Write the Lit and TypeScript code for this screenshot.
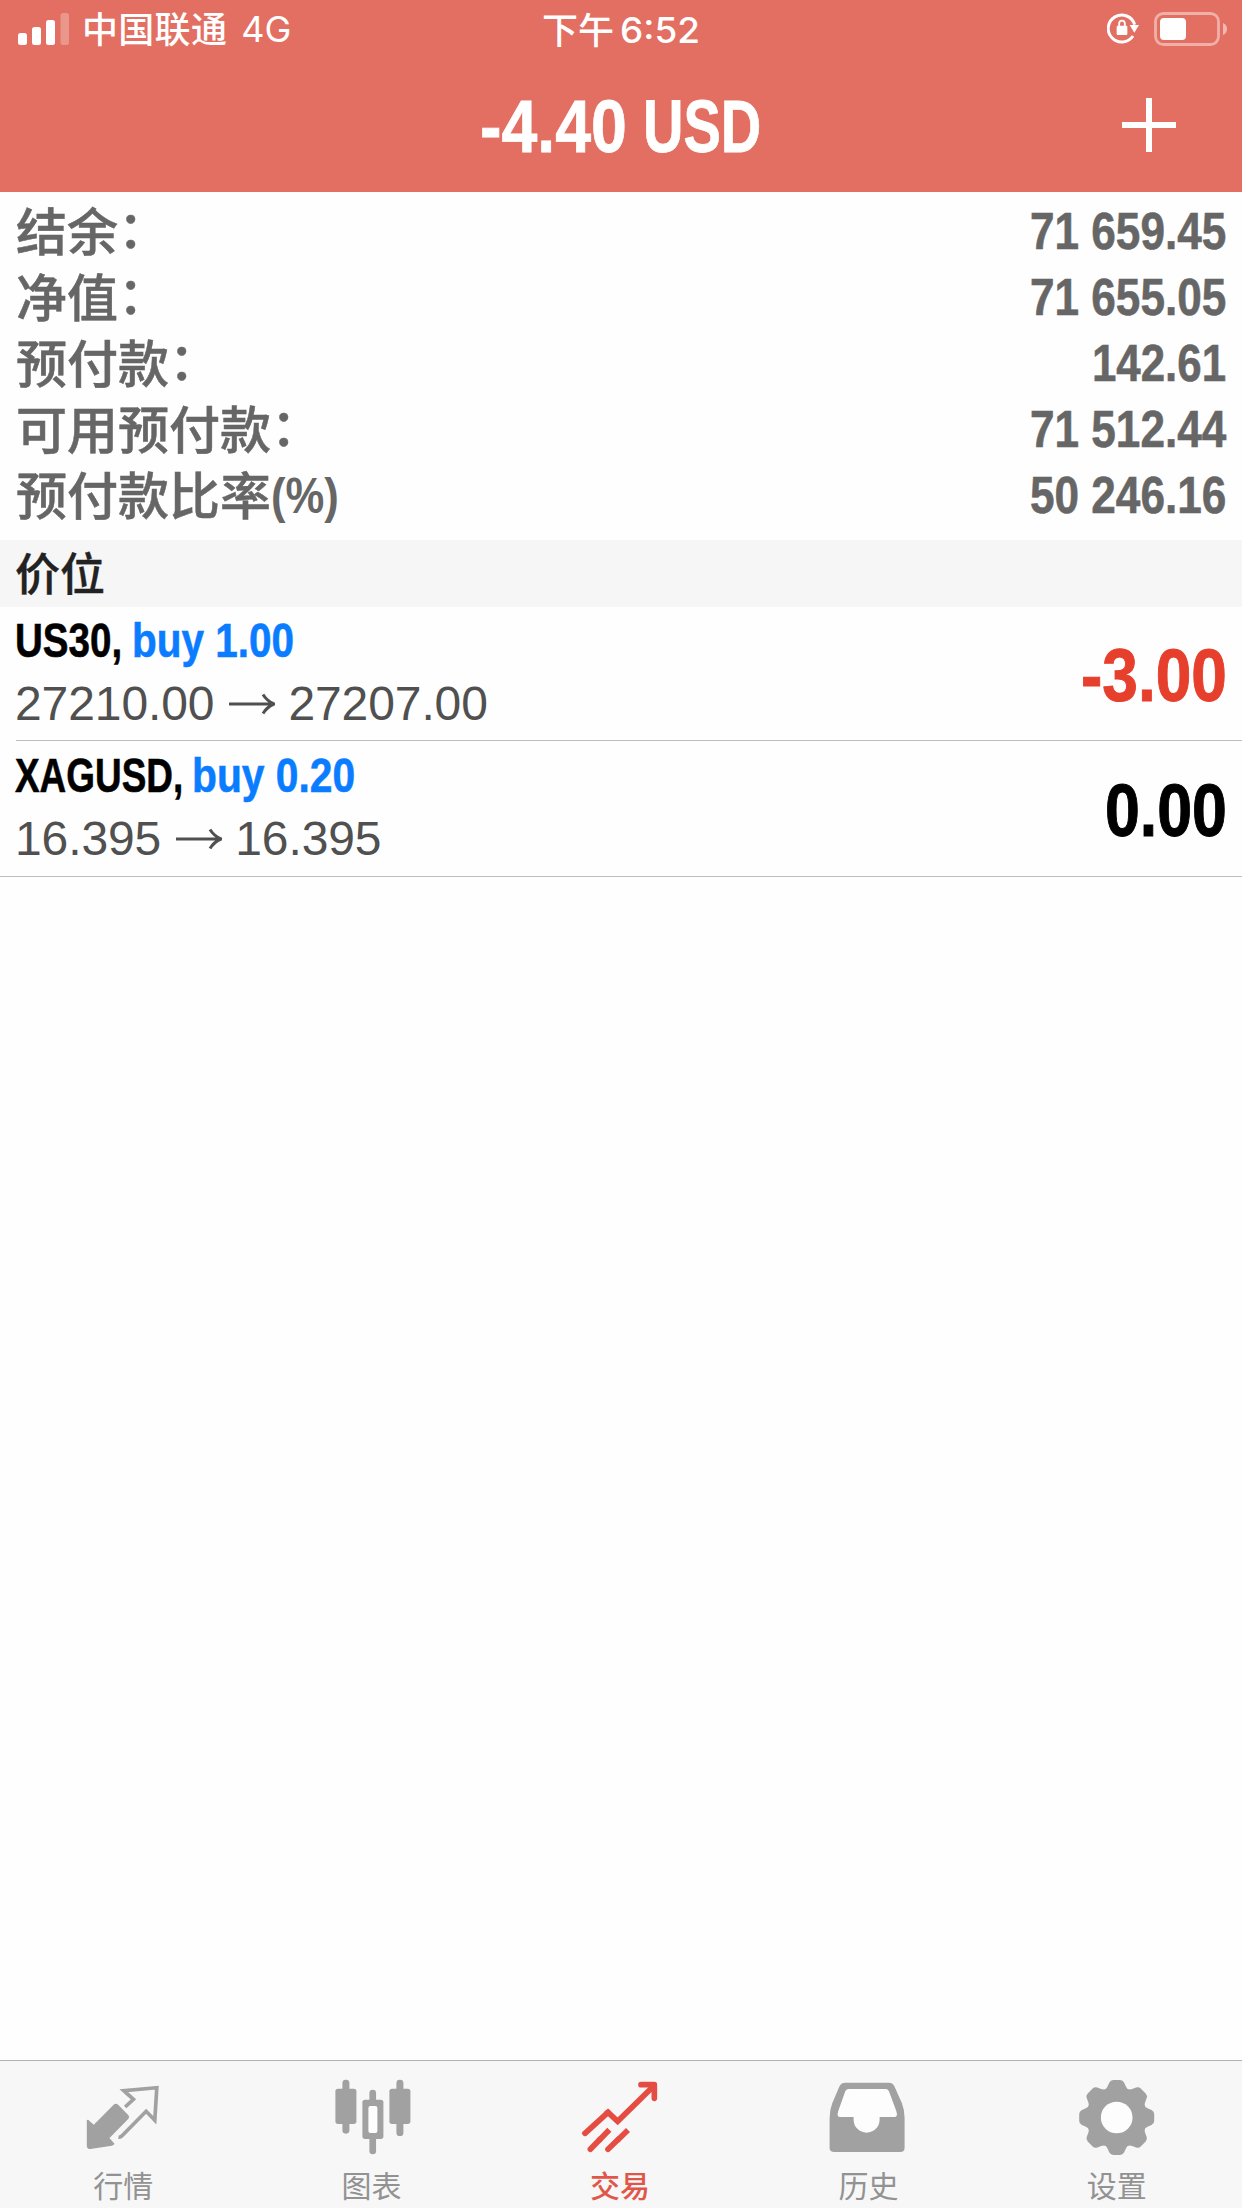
import { LitElement, html, css, svg } from "lit";
import { customElement, property } from "lit/decorators.js";

/** Condenses a run of text horizontally to a given advance width. */
@customElement("fit-text")
class FitText extends LitElement {
  @property() text = "";
  @property({ type: Number }) width = 0;

  static styles = css`
    :host { display: inline-block; white-space: pre; }
    .run { display: inline-block; transform-origin: 0 50%; }
  `;

  updated() {
    const run = this.renderRoot.querySelector(".run") as HTMLElement;
    this.style.width = `${this.width}px`;
    run.style.transform = `scaleX(${this.width / run.offsetWidth})`;
  }

  render() {
    return html`<span class="run">${this.text}</span>`;
  }
}

const stats = [
  { label: "结余", colon: true, unit: "", value: "71 659.45", width: 196 },
  { label: "净值", colon: true, unit: "", value: "71 655.05", width: 196 },
  { label: "预付款", colon: true, unit: "", value: "142.61", width: 134 },
  { label: "可用预付款", colon: true, unit: "", value: "71 512.44", width: 196 },
  { label: "预付款比率", colon: false, unit: "(%)", value: "50 246.16", width: 196 },
];

const positions = [
  { symbol: "US30,", sw: 107, side: "buy 1.00", bw: 162, gap: 10, open: "27210.00", close: "27207.00", profit: "-3.00", pw: 146, loss: true },
  { symbol: "XAGUSD,", sw: 168, side: "buy 0.20", bw: 163, gap: 9, open: "16.395", close: "16.395", profit: "0.00", pw: 122, loss: false },
];

const gearTeeth = [0, 45, 90, 135, 180, 225, 270, 315];

const tabs = [
  {
    name: "行情", active: false, box: "132.6 78 240 240",
    art: svg`
      <path fill="currentColor" d="M223 163Q229 159 235 164L266 196Q270 201 266 206L209 264L224 281Q222 286 216 287L152 297Q141 297 141 287V211Q145 207 149 213L162 224Z"/>
      <path fill="none" stroke="currentColor" stroke-width="11" d="M256 171L281 148L252 122L351 113L345 211L319 184L246 258Q242 262 236 261"/>`,
  },
  {
    name: "图表", active: false, box: "877.8 78 240 240",
    art: svg`
      <g fill="currentColor">
        <rect x="906" y="89" width="21" height="162" rx="10"/><rect x="885" y="116" width="63" height="106" rx="8"/>
        <rect x="1068" y="89" width="21" height="169" rx="10"/><rect x="1047" y="116" width="63" height="106" rx="8"/>
        <rect x="987" y="119" width="20" height="194" rx="10"/><rect x="966" y="149" width="63" height="118" rx="8"/>
      </g>
      <rect x="984" y="168" width="27" height="81" rx="6" fill="#fdfdfd"/>`,
  },
  {
    name: "交易", active: true, box: "123 78 240 240",
    art: svg`
      <g fill="none" stroke="currentColor" stroke-width="17" stroke-linejoin="miter">
        <path stroke-linecap="round" d="M135 250L204 187"/>
        <path d="M198 192L204 187L233 214L338 111"/>
        <path stroke-linecap="round" stroke-linejoin="round" d="M303 104H343V145"/>
        <path stroke-linecap="round" d="M151 298L180 268M204 298L235 268"/>
        <path d="M176 272L208 239M231 272L264 240"/>
      </g>
      <path fill="currentColor" d="M318 104H343V130Z"/>`,
  },
  {
    name: "历史", active: false, box: "868.2 78 240 240",
    art: svg`
      <path fill="currentColor" d="M917 98H1048Q1059 98 1064 108L1087 160Q1095 180 1095 205V293Q1095 306 1082 306H884Q870 306 870 293V205Q870 180 878 160L900 108Q905 98 917 98Z"/>
      <path fill="#fdfdfd" d="M928 117H1038Q1045 117 1048 124L1070 183Q1076 201 1064 201H1020V209A39 39 0 0 1 942 209V201H902Q890 201 896 183L917 124Q920 117 928 117Z"/>`,
  },
  {
    name: "设置", active: false, box: "113.4 78 240 240",
    art: svg`
      <g fill="currentColor">
        <circle cx="229.500" cy="202.500" r="91"/>
        ${gearTeeth.map((a) => svg`<path transform="rotate(${a} 229.500 202.500)" d="M188 122Q198 119 203 107L207 98Q211 90 219 90H240Q248 90 252 98L256 107Q261 119 271 122Z"/>`)}
      </g>
      <circle cx="229.500" cy="202.500" r="47.500" fill="#fdfdfd"/>`,
  },
];

@customElement("app-root")
class AppRoot extends LitElement {
  static styles = css`
    :host {
      display: flex; flex-direction: column; width: 100%; height: 2208px; overflow: hidden;
      background: #fefefe; font-family: "Liberation Sans", "Noto Sans CJK SC", sans-serif;
    }
    .header { height: 192px; background: #e26f61; color: #fff; flex: none; }
    .status {
      height: 60px; box-sizing: border-box; padding: 0 14px 0 18px; display: grid;
      grid-template-columns: 1fr auto 1fr; font: 500 36px/58px Inter, "Noto Sans CJK SC", sans-serif;
    }
    .status-group { display: flex; align-items: center; height: 58px; }
    .status-group.end { justify-content: flex-end; }
    .signal { width: 51px; height: 33px; margin-right: 13px; }
    .carrier { font-family: "Noto Sans CJK SC", sans-serif; letter-spacing: .3px; line-height: 54px; height: 58px; }
    .network { margin-left: 14px; font-weight: 400; }
    .clock { display: flex; gap: 6px; align-items: center; padding-right: 4px; }
    .clock-part { font-family: "Noto Sans CJK SC", sans-serif; line-height: 54px; height: 58px; }
    .lock { width: 32px; height: 33px; margin: 0 15px 2px 0; }
    .battery { width: 74px; height: 34px; }
    .nav { height: 132px; display: grid; grid-template-columns: 1fr auto 1fr; align-items: center; }
    .title {
      grid-column: 2; display: flex; gap: 16px; padding-right: 2px;
      font-weight: 700; font-size: 75px; line-height: 90px; -webkit-text-stroke: .8px;
    }
    .add { justify-self: end; width: 54px; height: 54px; margin-right: 66px; margin-bottom: 2px; }
    .stats { padding: 6px 16px 12px 16px; color: #666; flex: none; }
    .stat { display: flex; justify-content: space-between; height: 66px; font-weight: 700; }
    .label { display: flex; font: 500 51px/62px "Noto Sans CJK SC", sans-serif; white-space: nowrap; -webkit-text-stroke: .5px; }
    .colon { line-height: 56px; }
    .unit { font: 700 50px/68px "Liberation Sans", sans-serif; -webkit-text-stroke: 0; }
    .value { font-size: 52px; line-height: 66px; -webkit-text-stroke: .6px; }
    .section {
      height: 67px; box-sizing: border-box; padding: 0 15px; background: #f6f6f6; color: #222; flex: none;
      font: 500 45px/63px "Noto Sans CJK SC", sans-serif; -webkit-text-stroke: .4px;
    }
    .position {
      height: 134px; margin-left: 16px; padding-right: 15px; box-sizing: border-box; flex: none;
      display: flex; justify-content: space-between; align-items: center; border-bottom: 1px solid #bdbdc0;
    }
    .position.last { height: 136px; margin-left: 0; padding-left: 16px; }
    .deal { display: flex; flex-direction: column; align-self: flex-start; padding-top: 2px; margin-left: -1px; }
    .position.last .deal { padding-top: 3px; }
    .line { display: flex; height: 63px; line-height: 63px; }
    .line.head { font-weight: 700; font-size: 49px; color: #000; -webkit-text-stroke: .6px; }
    .side { color: #0a7cff; }
    .line.prices { font-size: 48px; color: #505050; align-items: center; }
    .price { letter-spacing: -.1px; }
    .arrow { width: 46px; height: 22px; margin: 0 13px 0 15px; }
    .profit { font-weight: 700; font-size: 75px; line-height: 90px; color: #000; margin-top: 2px; -webkit-text-stroke: 1px; }
    .profit.loss { color: #e63f2c; }
    .tabs {
      margin-top: auto; height: 148px; box-sizing: border-box; border-top: 1px solid #b2b2b2; flex: none;
      background: #f7f7f7; display: grid; grid-template-columns: repeat(5, 1fr); color: #a1a1a1;
    }
    .tab { display: flex; flex-direction: column; align-items: center; padding-top: 15px; }
    .tab.active { color: #e54d42; }
    .icon { width: 80px; height: 80px; flex: none; }
    .tab-name { font: 400 30px/44px "Noto Sans CJK SC", sans-serif; color: #929292; margin-top: 6px; padding-right: 2px; }
    .tab.active .tab-name { color: #e0574a; font-weight: 500; }
  `;

  render() {
    return html`
      <header class="header">
        <div class="status">
          <div class="status-group">
            <svg class="signal" viewBox="0 0 51 33" fill="#fff">
              <rect x="0" y="20" width="9" height="12" rx="2.500"/><rect x="14" y="14" width="9" height="18" rx="2.500"/>
              <rect x="28" y="7" width="9" height="25" rx="2.500"/><rect x="42.500" y="0" width="8.500" height="32" rx="2.500" opacity=".27"/>
            </svg>
            <span class="carrier">中国联通</span><span class="network">4G</span>
          </div>
          <div class="clock"><span class="clock-part">下午</span><fit-text .text=${"6:52"} .width=${80}></fit-text></div>
          <div class="status-group end">
            <svg class="lock" viewBox="318 36 96 99">
              <path d="M396 108A40.500 40.500 0 1 1 401 74" fill="none" stroke="#fff" stroke-width="9"/>
              <path d="M386 75H414L400 98Z" fill="#fff"/>
              <rect x="347" y="77" width="32" height="28" rx="3" fill="#fff"/>
              <path d="M354.500 80V71Q354.500 62 363 62T371.500 71V80" fill="none" stroke="#fff" stroke-width="5.500"/>
            </svg>
            <svg class="battery" viewBox="0 0 74 34">
              <rect x="1.500" y="1.500" width="63" height="31" rx="8" fill="none" stroke="#fff" stroke-opacity=".45" stroke-width="2.800"/>
              <rect x="6" y="6" width="26" height="22" rx="4" fill="#fff"/>
              <path d="M69 11Q73 12.500 73 17T69 23Z" fill="#fff" fill-opacity=".5"/>
            </svg>
          </div>
        </div>
        <div class="nav">
          <div class="title">
            <fit-text .text=${"-4.40"} .width=${147}></fit-text>
            <fit-text .text=${"USD"} .width=${118}></fit-text>
          </div>
          <svg class="add" viewBox="0 0 54 54"><path d="M27 0V54M0 27H54" stroke="#fff" stroke-width="6"/></svg>
        </div>
      </header>
      <section class="stats">
        ${stats.map((s) => html`
          <div class="stat">
            <span class="label"><span>${s.label}</span>${s.colon ? html`<span class="colon">：</span>` : ""}${s.unit ? html`<fit-text class="unit" .text=${s.unit} .width=${68}></fit-text>` : ""}</span>
            <fit-text class="value" .text=${s.value} .width=${s.width}></fit-text>
          </div>`)}
      </section>
      <div class="section">价位</div>
      ${positions.map((p, i) => html`
        <div class="position ${i === positions.length - 1 ? "last" : ""}">
          <div class="deal">
            <div class="line head" style="gap:${p.gap}px">
              <fit-text .text=${p.symbol} .width=${p.sw}></fit-text>
              <fit-text class="side" .text=${p.side} .width=${p.bw}></fit-text>
            </div>
            <div class="line prices">
              <span class="price">${p.open}</span>
              <svg class="arrow" viewBox="0 0 46 22" fill="none" stroke="currentColor" stroke-width="3"><path d="M0 11H44M34 1.500Q38 8 45 11Q38 14 34 20.500"/></svg>
              <span class="price">${p.close}</span>
            </div>
          </div>
          <fit-text class="profit ${p.loss ? "loss" : ""}" .text=${p.profit} .width=${p.pw}></fit-text>
        </div>`)}
      <nav class="tabs">
        ${tabs.map((t) => html`
          <div class="tab ${t.active ? "active" : ""}">
            <svg class="icon" viewBox=${t.box}>${t.art}</svg>
            <span class="tab-name">${t.name}</span>
          </div>`)}
      </nav>
    `;
  }
}
